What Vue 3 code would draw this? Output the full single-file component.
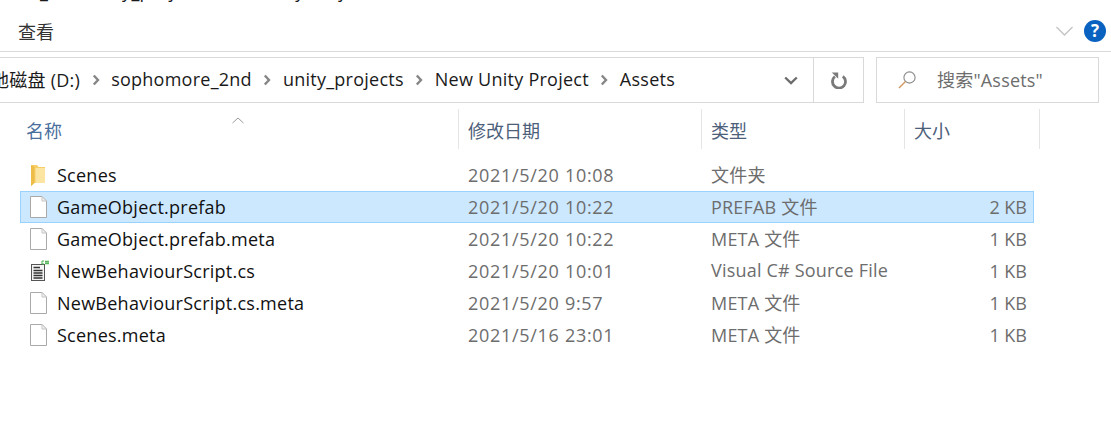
<script setup>
const crumbs = ['sophomore_2nd', 'unity_projects', 'New Unity Project', 'Assets']
const columns = [
  { label: '名称', cls: 'h-name' },
  { label: '修改日期', cls: 'h-date' },
  { label: '类型', cls: 'h-type' },
  { label: '大小', cls: 'h-size' }
]
const rows = [
  { name: 'Scenes', date: '2021/5/20 10:08', type: '文件夹', size: '', icon: 'folder' },
  { name: 'GameObject.prefab', date: '2021/5/20 10:22', type: 'PREFAB 文件', size: '2 KB', icon: 'file', selected: true },
  { name: 'GameObject.prefab.meta', date: '2021/5/20 10:22', type: 'META 文件', size: '1 KB', icon: 'file' },
  { name: 'NewBehaviourScript.cs', date: '2021/5/20 10:01', type: 'Visual C# Source File', size: '1 KB', icon: 'cs' },
  { name: 'NewBehaviourScript.cs.meta', date: '2021/5/20 9:57', type: 'META 文件', size: '1 KB', icon: 'file' },
  { name: 'Scenes.meta', date: '2021/5/16 23:01', type: 'META 文件', size: '1 KB', icon: 'file' }
]
</script>

<template>
  <div class="window">
    <div class="title"><div class="title-text">_2nd\unity_projects\New Unity Project\Assets</div></div>
    <div class="ribbon">
      <span class="tab">查看</span>
      <div class="ribbon-right">
        <svg width="20" height="12" viewBox="0 0 20 12"><path d="M1.5 2 L9.500 10 L17.500 2" fill="none" stroke="#c4c4c4" stroke-width="1.4"/></svg>
        <span class="help">?</span>
      </div>
    </div>
    <div class="navbar">
      <div class="address">
        <div class="crumbs">
          <span class="crumb">本地磁盘 (D:)</span>
          <template v-for="c in crumbs" :key="c">
            <svg class="sep" width="8" height="12" viewBox="0 0 8 12"><path d="M1.8 1.5 L6 6 L1.8 10.5" fill="none" stroke="#868686" stroke-width="2.4"/></svg>
            <span class="crumb">{{ c }}</span>
          </template>
        </div>
        <div class="drop">
          <svg width="14" height="9" viewBox="0 0 14 9"><path d="M1.2 1.5 L7 7 L12.8 1.5" fill="none" stroke="#6d6d6d" stroke-width="2.4"/></svg>
        </div>
        <div class="refresh">
          <svg width="18" height="18" viewBox="0 0 18 18">
            <path d="M4.900 4.500 A6.500 6.500 0 1 0 12.800 4.300" fill="none" stroke="#7a7a7a" stroke-width="2.800" transform="translate(0 1)"/>
            <path d="M1.800 1.500 H8.200 V7.800 Z" fill="#7a7a7a"/>
          </svg>
        </div>
      </div>
      <div class="search">
        <svg width="20" height="20" viewBox="0 0 20 20">
          <circle cx="12.500" cy="7.500" r="5.600" fill="none" stroke="#8a8a8a" stroke-width="1.100"/>
          <path d="M8.500 11.500 L2 18" stroke="#d09a62" stroke-width="1.400"/>
        </svg>
        <span class="search-text">搜索"Assets"</span>
      </div>
    </div>
    <div class="list">
      <span class="sort">
        <svg width="12" height="7" viewBox="0 0 12 7"><path d="M0.500 6 L6 1 L11.500 6" fill="none" stroke="#9a9a9a" stroke-width="1"/></svg>
      </span>
      <div class="header">
        <div v-for="col in columns" :key="col.label" class="hcell" :class="col.cls">{{ col.label }}</div>
      </div>
      <div class="rows">
        <div v-for="r in rows" :key="r.name" class="row" :class="{ selected: r.selected }">
          <div class="c-name">
            <svg v-if="r.icon === 'folder'" class="icon" width="20" height="24" viewBox="0 0 20 24">
              <path d="M3 2 H9 L10.500 4 H17 V20 H6 L3 23 Z" fill="#f6cf66"/>
              <path d="M3 2 L6.500 4 V20 L3 23 Z" fill="#eebc48"/>
              <path d="M7.500 5 H17 V20 H7.500 Z" fill="#fce5a0"/>
            </svg>
            <svg v-else-if="r.icon === 'file'" class="icon" width="20" height="24" viewBox="0 0 20 24">
              <path d="M2.500 1.500 H14 L18.500 6 V22.500 H2.500 Z" fill="#fff" stroke="#a9a9a9"/>
              <path d="M14 1.500 V6 H18.500 Z" fill="#f2f2f2" stroke="#c4c4c4"/>
            </svg>
            <svg v-else class="icon" width="20" height="24" viewBox="0 0 20 24">
              <rect x="3.500" y="5.500" width="13" height="16" fill="#f4f4f4" stroke="#555"/>
              <path d="M5.500 8.500 H12 M5.500 11.500 H14.500 M5.500 14 H14.500 M5.500 16.500 H14.500 M5.500 19 H14.500" stroke="#333" stroke-width="1.300"/>
              <path d="M16 2 H14 V5 H16 M18 1.500 V5.500 M20 1.500 V5.500 M17 2.700 H21 M17 4.300 H21" fill="none" stroke="#48b04a" stroke-width="1"/>
            </svg>
            <span class="name">{{ r.name }}</span>
          </div>
          <div class="c-date muted">{{ r.date }}</div>
          <div class="c-type muted">{{ r.type }}</div>
          <div class="c-size muted">{{ r.size }}</div>
        </div>
      </div>
    </div>
  </div>
</template>

<style>
body { margin: 0; background: #fff; }
</style>

<style scoped>
.window {
  width: 1111px;
  height: 430px;
  overflow: hidden;
  background: #fff;
  font-family: "Open Sans", "Noto Sans CJK SC", sans-serif;
  font-size: 18px;
  color: #1a1a1a;
}
.title {
  height: 4px;
  padding-left: 40px;
  overflow: hidden;
  white-space: nowrap;
}
.title-text {
  margin-top: -21px;
  line-height: 24px;
  letter-spacing: 0.25px;
}
.ribbon {
  height: 47px;
  box-sizing: border-box;
  display: flex;
  align-items: center;
  justify-content: space-between;
  padding: 6px 5px 0 18px;
}
.tab { font-size: 18px; color: #333; }
.ribbon-right { display: flex; align-items: center; gap: 9px; }
.help {
  width: 22px;
  height: 22px;
  border-radius: 50%;
  background: #0a62c0;
  color: #fff;
  font-size: 17px;
  font-weight: 700;
  line-height: 22px;
  text-align: center;
}
.navbar {
  border-top: 1px solid #dadada;
  height: 51px;
  box-sizing: border-box;
  padding-top: 5px;
  display: flex;
  gap: 12px;
}
.address {
  width: 864px;
  height: 46px;
  box-sizing: border-box;
  border: 1px solid #d9d9d9;
  border-left: 0;
  display: flex;
}
.crumbs {
  flex: 1;
  min-width: 0;
  overflow: hidden;
  display: flex;
  justify-content: flex-end;
  align-items: center;
  gap: 11.500px;
  padding-right: 88px;
  white-space: nowrap;
  letter-spacing: 0.25px;
}
.crumb { flex: none; margin-top: -2px; }
.sep { flex: none; }
.drop {
  width: 50px;
  flex: none;
  display: flex;
  align-items: center;
  justify-content: center;
  padding-left: 6px;
  box-sizing: border-box;
}
.refresh {
  width: 49px;
  flex: none;
  border-left: 1px solid #d9d9d9;
  display: flex;
  align-items: center;
  justify-content: center;
}
.search {
  width: 223px;
  height: 46px;
  box-sizing: border-box;
  border: 1px solid #d9d9d9;
  display: flex;
  align-items: center;
  padding-left: 20px;
  gap: 20px;
}
.search-text { color: #6d6d6d; letter-spacing: 0.2px; margin-top: -2px; }
.list { position: relative; padding-left: 20px; }
.sort { position: absolute; left: 232px; top: 8px; line-height: 0; }
.header {
  display: flex;
  height: 40px;
  margin-top: 7px;
}
.hcell {
  flex: none;
  box-sizing: border-box;
  height: 40px;
  padding: 2px 0 0 9px;
  line-height: 40px;
  overflow: hidden;
  color: #4c607a;
  border-right: 1px solid #e5e5e5;
}
.h-name { width: 439px; padding-left: 6px; color: #4a6f9e; }
.h-date { width: 243px; }
.h-type { width: 203px; }
.h-size { width: 135px; }
.rows { margin-top: 10px; }
.row {
  display: flex;
  width: 1014px;
  height: 32px;
  box-sizing: border-box;
  border: 1px solid transparent;
  align-items: center;
}
.row.selected { background: #cce8ff; border-color: #99d1ff; }
.c-name {
  width: 438px;
  flex: none;
  box-sizing: border-box;
  display: flex;
  align-items: center;
  gap: 9px;
  padding-left: 7px;
}
.c-date { width: 243px; flex: none; padding-left: 9px; box-sizing: border-box; letter-spacing: 0.7px; }
.c-type { width: 202px; flex: none; padding-left: 9px; box-sizing: border-box; letter-spacing: 0.2px; margin-top: -2px; }
.c-size { width: 125px; flex: none; padding-right: 2px; box-sizing: border-box; text-align: right; }
.icon { flex: none; overflow: visible; }
.name { color: #111; white-space: nowrap; letter-spacing: 0.25px; }
.muted { color: #6d6d6d; white-space: nowrap; }
</style>
